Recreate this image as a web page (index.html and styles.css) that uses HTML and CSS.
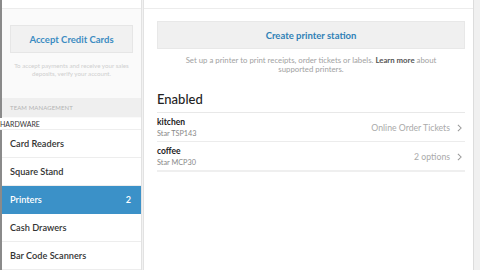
FILE: index.html
```html
<!DOCTYPE html>
<html>
<head>
<meta charset="utf-8">
<link rel="stylesheet" href="styles.css">
</head>
<body>
<div class="app">
  <div class="edge"></div>
  <aside class="sidebar">
    <div class="topband"></div>
    <div class="accept">
      <div class="accept-btn">Accept Credit Cards</div>
      <p class="caption">To accept payments and receive your sales<br>deposits, verify your account.</p>
    </div>
    <div class="section">TEAM MANAGEMENT</div>
    <div class="hardware">HARDWARE</div>
    <ul class="nav">
      <li class="nav-item">Card Readers</li>
      <li class="nav-item">Square Stand</li>
      <li class="nav-item active"><span>Printers</span><span>2</span></li>
      <li class="nav-item">Cash Drawers</li>
      <li class="nav-item">Bar Code Scanners</li>
    </ul>
  </aside>
  <main class="main">
    <div class="topband"></div>
    <div class="content">
      <div class="create-btn">Create printer station</div>
      <p class="desc">Set up a printer to print receipts, order tickets or labels. <b>Learn more</b> about<br>supported printers.</p>
      <h2 class="heading">Enabled</h2>
      <div class="list">
        <div class="row">
          <div class="info"><div class="name">kitchen</div><div class="model">Star TSP143</div></div>
          <div class="value">Online Order Tickets <svg class="chev" viewBox="0 0 6 10" width="5" height="8"><path d="M1 1l4 4-4 4" fill="none" stroke="#9a9a9a" stroke-width="1.3"/></svg></div>
        </div>
        <div class="row">
          <div class="info"><div class="name">coffee</div><div class="model">Star MCP30</div></div>
          <div class="value">2 options <svg class="chev" viewBox="0 0 6 10" width="5" height="8"><path d="M1 1l4 4-4 4" fill="none" stroke="#9a9a9a" stroke-width="1.3"/></svg></div>
        </div>
      </div>
    </div>
  </main>
  <div class="right"></div>
</div>
</body>
</html>
```
FILE: styles.css
```css
* { box-sizing: border-box; }
html, body { margin: 0; padding: 0; }
body {
  width: 480px; height: 270px; overflow: hidden;
  font-family: Lato, "Open Sans", sans-serif;
  background: #f2f2f2;
}
.app { display: flex; height: 270px; }
.edge { width: 2px; background: #8a8a8a; flex: none; }
.sidebar {
  width: 140px; flex: none; background: #fafafa;
  border-right: 1px solid #e2e2e2;
  display: flex; flex-direction: column;
}
.topband { height: 9px; background: #fff; border-bottom: 1px solid #ececec; flex: none; }
.accept { padding: 16px 8px 0 8px; }
.accept-btn {
  height: 28px; background: #f1f1f1; border: 1px solid #e6e6e6;
  display: flex; align-items: center; justify-content: center;
  font-size: 9.5px; font-weight: 700; color: #3b8cc2;
}
.caption {
  margin: 9px 0 0; text-align: center; font-size: 6.2px; line-height: 8px; color: #cfcfcf;
}
.section {
  margin-top: 20px; height: 21px; background: #efefef;
  font-size: 6px; color: #b4b4b4; padding-left: 8px;
  display: flex; align-items: center; letter-spacing: 0.1px;
}
.hardware {
  margin-left: -2px; height: 13px; background: #fff; margin-top: 1px;
  font-size: 7px; color: #333; display: flex; align-items: center;
  border-bottom: 1px solid #eee;
}
.nav { list-style: none; margin: 0; padding: 0; background: #fff; flex: 1; }
.nav-item {
  height: 28px; padding: 0 10px 0 8px; display: flex; align-items: center; justify-content: space-between;
  font-size: 9.2px; font-weight: 600; color: #333;
  border-bottom: 1px solid #ededed;
}
.nav-item.active { background: #3b91c8; color: #fff; border-bottom-color: #3b91c8; }
.main {
  width: 331px; flex: none; margin-left: 1px; background: #fff;
  border-left: 1px solid #e2e2e2; border-right: 1px solid #dcdcdc;
}
.content { padding: 12px 8px 0 13px; }
.create-btn {
  height: 28px; background: #f0f0f0; border: 1px solid #e8e8e8;
  display: flex; align-items: center; justify-content: center;
  font-size: 9.5px; font-weight: 700; color: #2f80b6;
}
.desc {
  margin: 7px 0 0; text-align: center; font-size: 7.8px; line-height: 9px; color: #a2a2a2;
}
.desc b { color: #555; font-weight: 700; }
.heading { margin: 17px 0 0; font-size: 13px; font-weight: 500; color: #222; height: 21px; line-height: 17px; }
.list { border-top: 1px solid #e8e8e8; border-bottom: 2px solid #efefef; }
.row {
  height: 29px; display: flex; align-items: center; justify-content: space-between;
  border-bottom: 1px solid #ececec; padding-top: 1px;
}
.row:last-child { border-bottom: none; height: 28px; }
.name { font-size: 8.5px; font-weight: 700; color: #222; line-height: 12px; }
.model { font-size: 7.3px; color: #888; line-height: 11px; }
.value { font-size: 8.7px; color: #aaa; display: flex; align-items: center; gap: 7px; padding-right: 3px; }
.chev { display: block; }
.right { flex: 1; background: #f0f0f0; }
```
